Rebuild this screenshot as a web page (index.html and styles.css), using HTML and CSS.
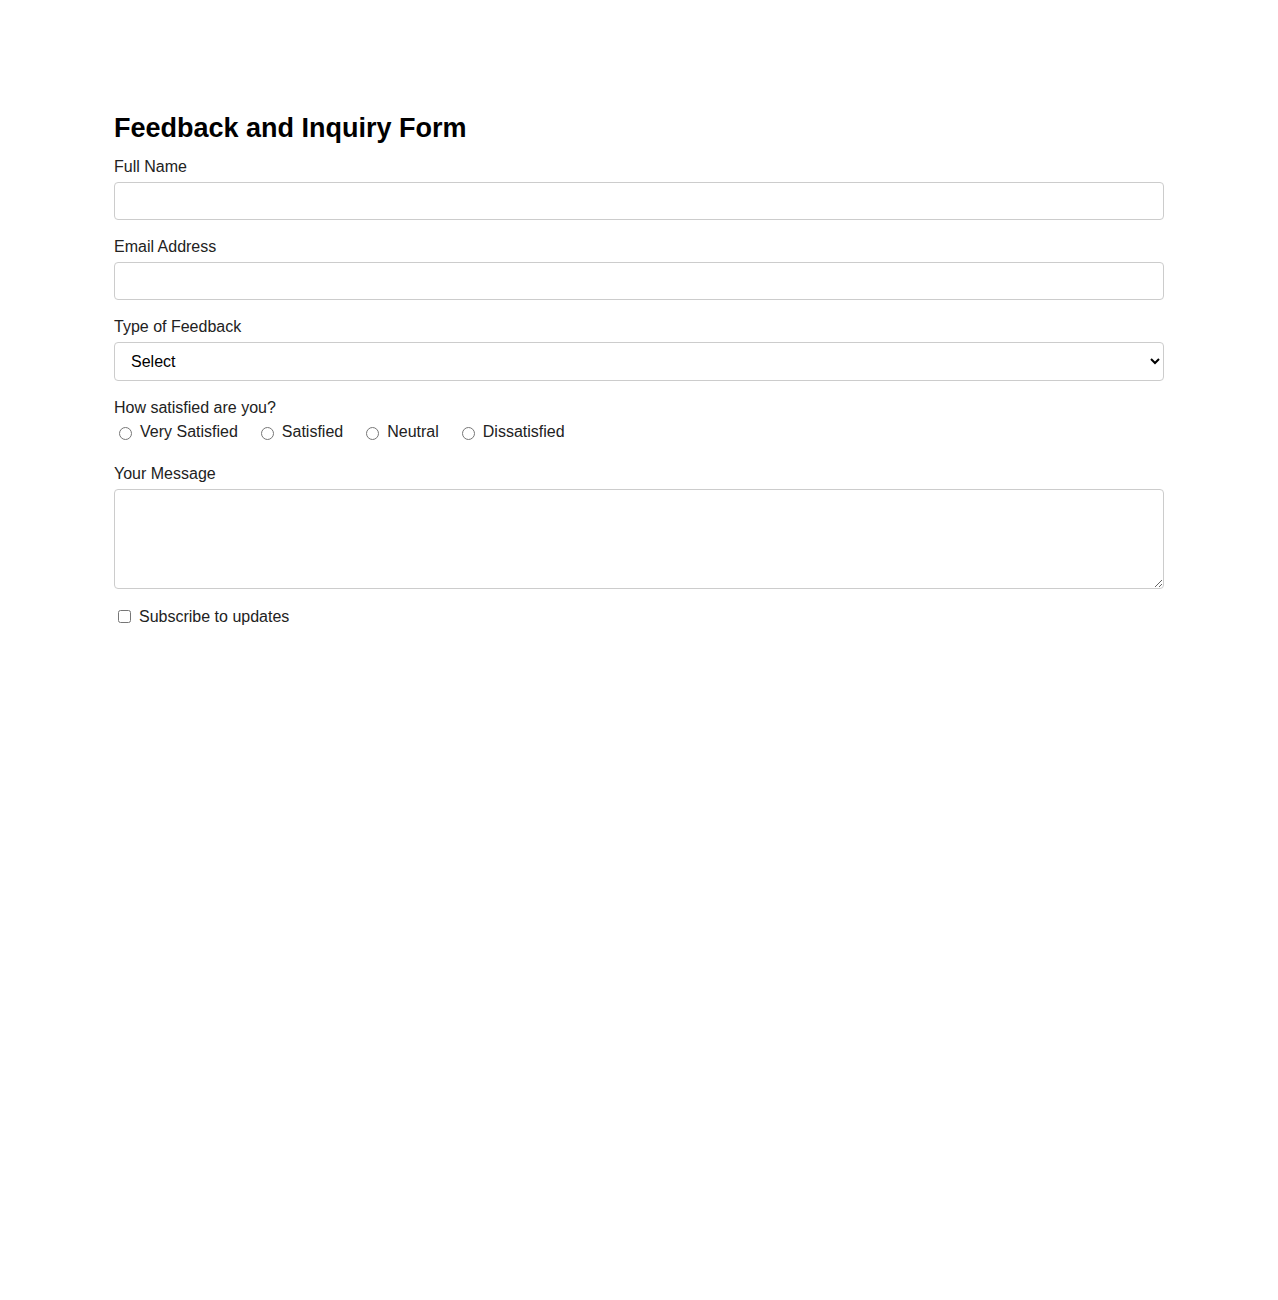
FILE: index.html
```html
<!DOCTYPE html>
<html lang="en">
<head>
    <meta charset="UTF-8">
    <title>Feedback and Inquiry Form</title>
    <link rel="stylesheet" href="styles.css">
</head>
<body>
    <!-- Formulario de contacto y opiniones -->
    <form id="feedbackForm" class="feedback-form">
        <h1>Feedback and Inquiry Form</h1>

        <div class="field">
            <label for="fullName">Full Name</label>
            <input type="text" id="fullName" name="fullName">
        </div>

        <div class="field">
            <label for="email">Email Address</label>
            <input type="email" id="email" name="email">
        </div>

        <div class="field">
            <label for="feedbackType">Type of Feedback</label>
            <select id="feedbackType" name="feedbackType">
                <option value="">Select</option>
                <option value="suggestion">Suggestion</option>
                <option value="complaint">Complaint</option>
                <option value="question">Question</option>
            </select>
        </div>

        <div class="field">
            <span class="field-title">How satisfied are you?</span>
            <div class="radio-group">
                <label class="radio"><input type="radio" name="satisfaction" value="very"> Very Satisfied</label>
                <label class="radio"><input type="radio" name="satisfaction" value="satisfied"> Satisfied</label>
                <label class="radio"><input type="radio" name="satisfaction" value="neutral"> Neutral</label>
                <label class="radio"><input type="radio" name="satisfaction" value="dissatisfied"> Dissatisfied</label>
            </div>
        </div>

        <div class="field">
            <label for="message">Your Message</label>
            <textarea id="message" name="message"></textarea>
        </div>

        <label class="checkbox"><input type="checkbox" id="subscribe" name="subscribe"> Subscribe to updates</label>
    </form>
</body>
</html>
```

FILE: styles.css
```css
/* Estilos generales */
body {
    background: #fff;
    font-family: Arial, "Liberation Sans", sans-serif;
    color: #222;
    margin: 0;
}
/* Contenedor del formulario */
.feedback-form {
    max-width: 1050px;
    margin: 0 auto;
    padding: 113px 0 40px;
}
/* Título */
h1 {
    font-size: 27px;
    font-weight: bold;
    color: #000;
    margin: 0 0 14px;
}
/* Cada grupo de campo */
.field {
    margin-bottom: 18px;
}
.field label,
.field-title {
    display: block;
    font-size: 16px;
    margin-bottom: 6px;
}
/* Campos de texto, select y textarea */
input[type="text"],
input[type="email"],
select,
textarea {
    display: block;
    width: 100%;
    box-sizing: border-box;
    border: 1px solid #ccc;
    border-radius: 4px;
    font-family: inherit;
    font-size: 16px;
    background: #fff;
}
input[type="text"],
input[type="email"] {
    height: 38px;
    padding: 8px 15px;
}
select {
    height: 39px;
    padding: 0 12px;
    color: #000;
}
textarea {
    height: 100px;
    padding: 8px 15px;
}
/* Opciones de satisfacción */
.radio-group {
    display: flex;
    padding-bottom: 6px;
}
.field .radio {
    display: flex;
    align-items: center;
    gap: 5px;
    margin: 0 18px 0 0;
}
/* Casilla de suscripción */
.checkbox {
    display: flex;
    align-items: center;
    gap: 5px;
    font-size: 16px;
}
```
